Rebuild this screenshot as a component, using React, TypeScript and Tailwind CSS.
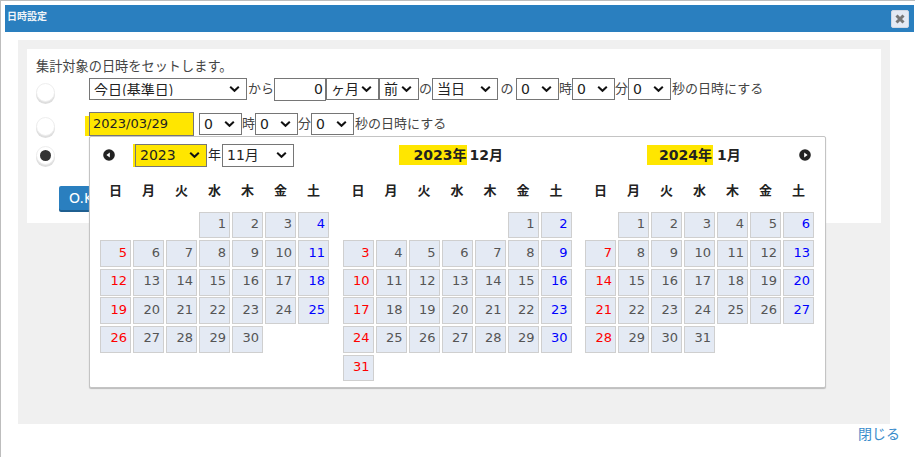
import React from "react";

const FONT = "[font-family:'DejaVu_Sans','Noto_Sans_CJK_JP',sans-serif]";

function Chevron() {
  return (
    <svg className="pointer-events-none absolute top-1/2 right-[7px] -translate-y-1/2" width="11" height="7" viewBox="0 0 11 7">
      <path d="M1.2 1.2 L5.5 5.3 L9.8 1.2" fill="none" stroke="#111" strokeWidth="2" />
    </svg>
  );
}

function Sel({ value, w, h = "h-[22px]", bg = "bg-white", cls = "", font = "" }: { value: string; w: string; h?: string; bg?: string; cls?: string; font?: string }) {
  return (
    <span className={`relative inline-block shrink-0 ${w} ${h} ${cls}`}>
      <select
        defaultValue={value}
        className={`block h-full w-full appearance-none border border-[#767676] ${bg} ${font} pl-[4px] text-[14px] leading-none text-[#222] outline-none`}
      >
        <option>{value}</option>
      </select>
      <Chevron />
    </span>
  );
}

function Radio({ on = false }: { on?: boolean }) {
  return (
    <span className="flex h-[19px] w-[19px] shrink-0 items-center justify-center rounded-full border border-[#eeeeee] bg-white shadow-[0_2px_0_#dedede]">
      {on && <span className="h-[11px] w-[11px] rounded-full bg-[#333]" />}
    </span>
  );
}

function Nav({ dir }: { dir: "l" | "r" }) {
  return (
    <svg className="block" width="12" height="12" viewBox="0 0 12 12">
      <circle cx="6" cy="6" r="5.8" fill="#222" />
      {dir === "l" ? <path d="M6.8 3.4 L3.4 6 L6.8 8.6 Z" fill="#fff" /> : <path d="M5.2 3.4 L8.6 6 L5.2 8.6 Z" fill="#fff" />}
    </svg>
  );
}

const WEEK = ["日", "月", "火", "水", "木", "金", "土"];

function Month({ start, days }: { start: number; days: number }) {
  const cells: React.ReactNode[] = [];
  for (let i = 0; i < start; i++) cells.push(<span key={`b${i}`} />);
  for (let d = 1; d <= days; d++) {
    const col = (start + d - 1) % 7;
    const color = col === 0 ? "text-[#ff0000]" : col === 6 ? "text-[#0000ff]" : "text-[#555555]";
    cells.push(
      <span
        key={d}
        className={`flex h-[26.8px] items-center justify-end border border-[#cfcfcf] bg-[#e4eaf4] pr-[3px] pb-[3px] text-[13px] leading-none ${color}`}
      >
        {d}
      </span>
    );
  }
  return (
    <div className="w-[231px] shrink-0">
      <div className="grid grid-cols-[repeat(7,33px)]">
        {WEEK.map((w) => (
          <span key={w} className="w-[31px] text-center text-[13px] leading-[18px] font-bold text-[#222]">
            {w}
          </span>
        ))}
      </div>
      <div className="mt-[11.6px] grid grid-cols-[repeat(7,31px)] gap-x-[2px] gap-y-[1.8px]">{cells}</div>
    </div>
  );
}

export default function App() {
  return (
    <div className={`${FONT} relative h-[457px] w-[915px] overflow-hidden border-t border-l border-[#bdbdbd] bg-white text-[13px] text-[#444]`}>
      <div className="mt-[4px] mr-[1px] ml-[4px] flex h-[27px] items-center justify-between bg-[#2a7fbf] pr-[5px] pl-[2px]">
        <span className="-mt-[4px] text-[10px] font-bold text-[#f0f4f8]">日時設定</span>
        <span className="flex h-[18px] w-[18px] items-center justify-center rounded-[2px] border border-[#d0d8e4] bg-[#e4eaf4]">
          <svg width="10" height="10" viewBox="0 0 10 10">
            <path d="M1.5 1.5 L8.5 8.5 M8.5 1.5 L1.5 8.5" stroke="#777" strokeWidth="3" />
          </svg>
        </span>
      </div>

      <div className="mt-[8px] ml-[17px] h-[384px] w-[872px] bg-[#f0f0f0] p-[9px]">
        <div className="relative h-[174px] w-[854px] bg-white pt-[9px] pl-[9px]">
          <div className="text-[13.2px] leading-[17px]">集計対象の日時をセットします。</div>

          <div className="mt-[3px] flex h-[22px] items-center whitespace-nowrap">
            <span className="mt-[6px] mr-[34px]"><Radio /></span>
            <Sel value="今日(基準日)" w="w-[158px]" font="[font-family:'Noto_Sans_CJK_JP',sans-serif]" />
            <span className="ml-[1px] w-[26px]">から</span>
            <input readOnly value="0" className="h-[23px] w-[52px] border border-[#767676] bg-white pr-[2px] text-right text-[14px] text-[#222] outline-none" />
            <Sel value="ヶ月" w="w-[53px]" />
            <Sel value="前" w="w-[40px]" />
            <span className="w-[13px] text-center">の</span>
            <Sel value="当日" w="w-[66px]" />
            <span className="w-[18px] text-center">の</span>
            <Sel value="0" w="w-[43px]" />
            <span className="w-[13px]">時</span>
            <Sel value="0" w="w-[43px]" />
            <span className="w-[13px]">分</span>
            <Sel value="0" w="w-[43px]" />
            <span className="ml-[1px]">秒の日時にする</span>
          </div>

          <div className="mt-[12px] flex h-[24px] items-center whitespace-nowrap">
            <span className="mt-[4px] mr-[34px]"><Radio /></span>
            <span className="relative mr-[5px] h-[24px] w-[105px] shrink-0 border border-[#767676] bg-[#ffe600] pl-[3px] text-[13px] leading-[22px] text-[#222]">
              <span className="absolute top-[3px] -bottom-[1px] -left-[5px] w-[4px] bg-[#ffe600]" />
              2023/03/29
            </span>
            <Sel value="0" w="w-[43px]" />
            <span className="w-[13px]">時</span>
            <Sel value="0" w="w-[43px]" />
            <span className="w-[13px]">分</span>
            <Sel value="0" w="w-[43px]" />
            <span className="ml-[1px]">秒の日時にする</span>
          </div>

          <div className="mt-[10px] flex h-[18px]">
            <Radio on />
          </div>

          <button className="mt-[22px] ml-[23px] block h-[24px] w-[60px] rounded-[2px] bg-[#2a7fbf] pl-[10px] text-left text-[14px] text-white shadow-[0_2px_0_#1f5f90]">
            O.K
          </button>

          <div className="absolute top-[87px] left-[62px] h-[252px] w-[737px] rounded-[2px] border border-[#c4c4c4] bg-white pt-[6px] pl-[10px] shadow-[0_1px_1px_#bbb]">
            <div className="flex h-[24px] items-center gap-x-[11.5px] text-[#222]">
              <div className="flex w-[231px] shrink-0 items-center">
                <span className="ml-[3px] w-[32px] shrink-0"><Nav dir="l" /></span>
                <Sel value="2023" w="w-[72px]" h="h-[23px]" bg="bg-[#ffe600]" cls="shadow-[-2px_0_0_#ffe600]" />
                <span className="mx-[1px] w-[13px]">年</span>
                <Sel value="11月" w="w-[72px]" h="h-[23px]" />
              </div>
              <div className="flex w-[231px] shrink-0 items-center pl-[56px] text-[14px] font-bold">
                <span className="mr-[3px] flex h-[20px] w-[68px] items-center justify-end bg-[#ffe600]">2023年</span>
                12月
              </div>
              <div className="flex w-[231px] shrink-0 items-center pl-[62px] text-[14px] font-bold">
                <span className="mr-[4px] flex h-[20px] w-[66px] items-center justify-end bg-[#ffe600] pr-[1px]">2024年</span>
                1月
                <span className="mr-[5px] ml-auto flex"><Nav dir="r" /></span>
              </div>
            </div>
            <div className="mt-[15px] flex gap-x-[11.5px]">
              <Month start={3} days={30} />
              <Month start={5} days={31} />
              <Month start={1} days={31} />
            </div>
          </div>
        </div>
      </div>

      <div className="mr-[15px] text-right text-[14px] leading-[20px] text-[#3a8ccb]">閉じる</div>
    </div>
  );
}
